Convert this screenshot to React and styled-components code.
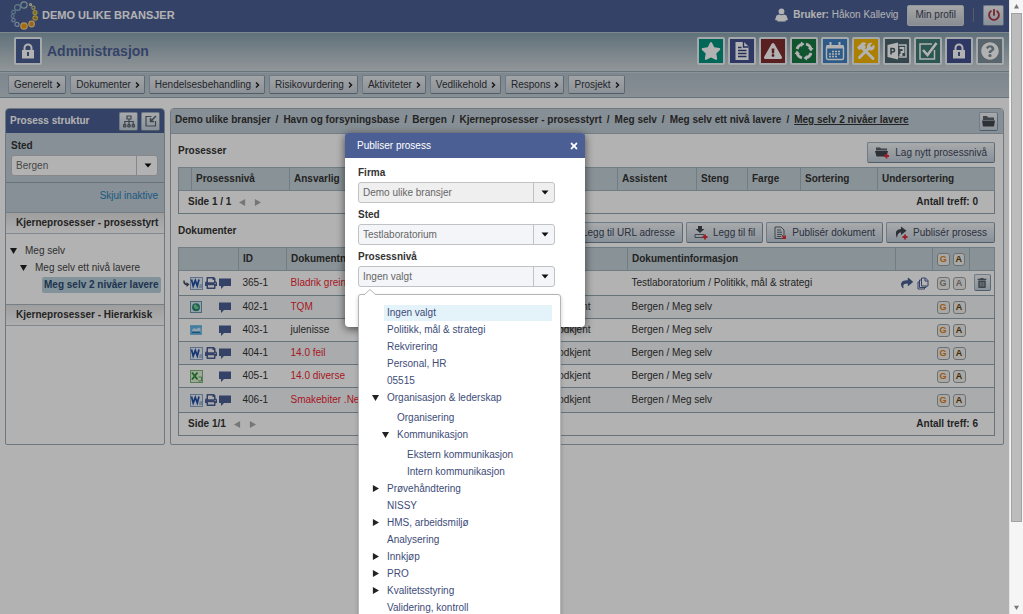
import React from "react";
import styled, { createGlobalStyle } from "styled-components";
import {
  FaStar,
  FaExclamationTriangle,
  FaQuestionCircle,
  FaPowerOff,
  FaPrint,
  FaShare,
  FaTrashAlt,
  FaTimes,
} from "react-icons/fa";

const GlobalStyle = createGlobalStyle`
  * {
    box-sizing: border-box;
  }
  body {
    margin: 0;
    background: #fff;
    color: #333;
    font-family: Arial, "Liberation Sans", sans-serif;
    font-size: 10px;
    line-height: 14px;
  }
  button, select {
    font: inherit;
    color: inherit;
    margin: 0;
  }
  a {
    color: inherit;
    text-decoration: none;
  }
  svg {
    display: block;
    flex: none;
  }
`;

const Shell = styled.div`
  display: flex;
  height: 100vh;
  overflow: hidden;
`;

const Page = styled.div`
  flex: 1;
  min-width: 0;
  position: relative;
  overflow: hidden;
`;

const TopBar = styled.header`
  display: flex;
  align-items: center;
  height: 32px;
  padding: 0 5px 2px 10px;
  background: #4c5f95;
  color: #fff;

  h1 {
    flex: 1;
    margin: 0 0 0 4px;
    font-size: 11px;
  }
`;

const UserInfo = styled.div`
  display: flex;
  align-items: center;

  p {
    margin: 0 9px 0 5px;
  }
`;

const Divider = styled.span`
  width: 1px;
  height: 14px;
  margin: 0 9px;
  background: #8a7f92;
`;

const Button = styled.button`
  display: inline-flex;
  align-items: center;
  justify-content: center;
  gap: 5px;
  height: 21px;
  padding: 0 7px;
  border: 1px solid #9fb0c0;
  border-bottom-color: #71869a;
  border-right-color: #8598aa;
  border-radius: 2px;
  background: linear-gradient(#f2f4f6, #c3cfdb);
  color: #3d4658;
  white-space: nowrap;
`;

const GreyButton = styled(Button)`
  border-color: #d3d8de;
  background: linear-gradient(#eeeff0, #c4c9d0);
`;

const SquareButton = styled(Button)`
  width: ${(p) => p.$size || 19}px;
  height: ${(p) => p.$size || 19}px;
  padding: 0;
  color: ${(p) => p.$color || "#56606c"};
`;

const TitleBar = styled.div`
  display: flex;
  align-items: center;
  height: 40px;
  padding: 0 5px 2px 14px;
  border-top: 1px solid #b4c3cd;
  border-bottom: 1px solid #93a5b1;
  background: linear-gradient(#8ba3b0, #d0d7db);

  h2 {
    flex: 1;
    margin: 0 0 0 5px;
    font-size: 14px;
    color: #4c5f95;
  }
`;

const Modules = styled.nav`
  display: flex;
  gap: 3px;
`;

const Tile = styled.a`
  display: flex;
  align-items: center;
  justify-content: center;
  width: 28px;
  height: 28px;
  border: 2px solid #eef3f5;
  border-radius: 2px;
  background: ${(p) => p.$bg};
  color: #fff;
`;

const Tabs = styled.nav`
  display: flex;
  align-items: center;
  gap: 4px;
  height: 26px;
  padding: 0 8px 1px;
  border-top: 1px solid #c6d3db;
  border-bottom: 1px solid #93a5b1;
  background: linear-gradient(#b4c2cb, #c2ced6);
`;

const Tab = styled(Button)`
  gap: 4px;
  height: 19px;
  padding: 0 4px 0 5px;
  background: linear-gradient(#e9ecee, #c9d1d9);
  color: #31353d;
`;

const Columns = styled.div`
  display: grid;
  grid-template-columns: 160px minmax(0, 1fr);
  gap: 5px;
  padding: 10px 5px;
`;

const Sidebar = styled.aside`
  border: 1px solid #9dadb9;
  border-radius: 4px 4px 2px 2px;
  overflow: hidden;
`;

const SidebarHead = styled.div`
  display: flex;
  align-items: center;
  gap: 3px;
  height: 24px;
  padding: 0 4px;
  background: #4c5f95;
  color: #fff;

  h3 {
    flex: 1;
    margin: 0;
    font-size: 10px;
  }
`;

const Filter = styled.div`
  height: 50px;
  padding: 6px 6px 6px 5px;
  border-bottom: 1px solid #93a5b1;
  background: #c0ced7;
`;

const FilterLink = styled.div`
  height: 29px;
  padding: 6px;
  background: #c0ced7;
  text-align: right;
  color: #2a7fb8;
`;

const GroupHead = styled.h4`
  margin: 0;
  height: 22px;
  padding-left: 10px;
  border-top: 1px solid #a9b6c0;
  border-bottom: 1px solid #b9c4cc;
  background: linear-gradient(#e3e3e3, #fbfbfb);
  font-size: 10px;
  line-height: 20px;
  white-space: nowrap;
`;

const SideTree = styled.ul`
  margin: 0;
  padding: 8px 0 10px 4px;
  list-style: none;
  min-height: 70px;
`;

const SideNode = styled.li`
  display: flex;
  align-items: center;
  gap: 8px;
  height: 17px;
  padding-left: ${(p) => p.$level * 10}px;
  color: #444;
`;

const Current = styled.strong`
  margin-left: 12px;
  padding: 1px 2px;
  border-radius: 2px;
  background: #b9d2de;
  color: #2f4a70;
  white-space: nowrap;
`;

const Panel = styled.main`
  min-width: 0;
  border: 1px solid #9dadb9;
  border-radius: 4px 4px 2px 2px;
  overflow: hidden;
`;

const PanelHead = styled.div`
  display: flex;
  align-items: center;
  justify-content: space-between;
  height: 25px;
  padding: 0 5px 0 4px;
  border-bottom: 1px solid #a5b5c0;
  background: #c0cdd6;
`;

const Crumbs = styled.nav`
  display: flex;
  gap: 5px;
  padding-bottom: 2px;
  font-weight: bold;
  white-space: nowrap;
  color: #333;

  a:last-child {
    text-decoration: underline;
  }
`;

const PanelBody = styled.div`
  padding: 8px 8px 8px 7px;
`;

const SectionHead = styled.div`
  display: flex;
  align-items: center;
  gap: 3px;
  height: 21px;
  margin: ${(p) => p.$top || 0}px 0 4px;

  h3 {
    flex: 1;
    margin: 0;
    padding-bottom: 4px;
    font-size: 10px;
  }
`;

const Table = styled.table`
  width: 100%;
  border: 1px solid #93a5b1;
  border-collapse: collapse;
  table-layout: fixed;

  th {
    height: 23px;
    padding: 0 4px;
    border: 1px solid #a2b3be;
    background: #c5d1d7;
    text-align: left;
    white-space: nowrap;
  }
  td {
    height: 23px;
    padding: 0 4px;
    border-bottom: 1px solid #93a5b1;
    white-space: nowrap;
    overflow: hidden;
  }
`;

const DocRow = styled.tr`
  background: ${(p) => (p.$odd ? "#f3f5f6" : "#fff")};

  td {
    height: ${(p) => (p.$tall ? 25 : 23)}px;
  }
`;

const DocLink = styled.a`
  color: ${(p) => (p.$red ? "#f01f33" : "#333")};
`;

const FileIcons = styled.div`
  display: grid;
  grid-template-columns: 7px 15px 14px 14px;
  align-items: center;
  color: #4c5f95;
`;

const TableFoot = styled.div`
  display: flex;
  align-items: center;
  justify-content: space-between;
  padding: 0 12px 0 5px;
  font-weight: bold;
`;

const Pager = styled.span`
  display: inline-flex;
  align-items: center;
  gap: 8px;
  color: #aaa;

  b {
    color: #333;
  }
`;

const Badges = styled.div`
  display: flex;
  justify-content: center;
  gap: 3px;
`;

const Badge = styled.span`
  width: 13px;
  height: 13px;
  border: 1px solid #98a2a8;
  border-radius: 3px;
  background: #f4f1ec;
  color: ${(p) => p.$color};
  font-weight: bold;
  font-size: 9px;
  line-height: 11px;
  text-align: center;
`;

const RowActions = styled.div`
  display: flex;
  align-items: center;
  justify-content: flex-end;
  gap: 4px;
  color: #4c5f95;
`;

const Overlay = styled.div`
  position: absolute;
  inset: 0;
  background: rgba(0, 0, 0, 0.3);
`;

const Modal = styled.section`
  position: absolute;
  top: 133px;
  left: 345px;
  width: 240px;
  height: 194px;
  border-radius: 4px;
  background: #fff;
  box-shadow: 0 2px 8px rgba(0, 0, 0, 0.6);
`;

const ModalHead = styled.div`
  display: flex;
  align-items: center;
  justify-content: space-between;
  height: 25px;
  padding: 0 6px 0 12px;
  border-radius: 3px 3px 0 0;
  background: #4c5f95;
  color: #fff;

  button {
    padding: 0;
    border: 0;
    background: none;
  }
`;

const ModalBody = styled.div`
  position: relative;
  padding: 8px 30px 0 13px;
`;

const Field = styled.div`
  margin-bottom: 5px;

  label {
    display: block;
    margin-bottom: 2px;
    font-weight: bold;
  }
`;

const SelectBox = styled.div`
  display: grid;
  height: 21px;

  select {
    grid-area: 1 / 1;
    appearance: none;
    width: 100%;
    height: 21px;
    padding: 0 24px 0 4px;
    border: 1px solid #c0c2c6;
    border-radius: 3px;
    background: ${(p) => p.$bg || "#f4f5f8"};
    color: #666;
    opacity: 1;
  }
  span {
    grid-area: 1 / 1;
    justify-self: end;
    display: flex;
    align-items: center;
    justify-content: center;
    width: 22px;
    border-left: 1px solid #c0c2c6;
    pointer-events: none;
  }
`;

const Popover = styled.div`
  position: absolute;
  top: 136px;
  left: 13px;
  width: 203px;
  padding: 9px 8px 20px 9px;
  border: 1px solid #b5b5b8;
  border-radius: 3px;
  background: #fff;
  box-shadow: 0 2px 4px rgba(0, 0, 0, 0.2);
`;

const Pointer = styled.svg`
  position: absolute;
  top: -6px;
  left: 5px;
`;

const Tree = styled.ul`
  margin: 0;
  padding: ${(p) => (p.$nested ? "3px 0 0 10px" : "0")};
  list-style: none;
`;

const TreeRow = styled.div`
  display: grid;
  grid-template-columns: 16px 1fr;
  align-items: center;
  height: 17px;

  span {
    padding-left: 4px;
  }
  a {
    padding: 1px 3px;
    background: ${(p) => (p.$active ? "#e4f2f9" : "none")};
    color: #3d4b78;
  }
`;

const ScrollTrack = styled.div`
  display: flex;
  flex-direction: column;
  align-items: center;
  width: 14px;
  padding: 4px 0;
  border-left: 1px solid #e6e6e6;
  background: #f5f5f5;
  color: #777;
`;

const ScrollThumb = styled.div`
  width: 11px;
  height: 84%;
  margin: 4px 0 auto;
  border: 1px solid #a2a2a2;
  background: #bcbcbc;
`;

const Triangle = ({ dir = "down", size = 7, color = "currentColor" }) => {
  const paths = {
    down: "M0 1h8L4 8z",
    up: "M0 7h8L4 0z",
    right: "M1 0v8l7-4z",
    left: "M7 0v8L0 4z",
  };
  return (
    <svg width={size} height={size} viewBox="0 0 8 8">
      <path d={paths[dir]} fill={color} />
    </svg>
  );
};

const Caret = () => (
  <svg width="8" height="5" viewBox="0 0 8 5">
    <path d="M0.5 0.5h7L4 4.5z" fill="#111" />
  </svg>
);

const Chevron = () => (
  <svg width="5" height="8" viewBox="0 0 5 8">
    <path d="M1 1.500L3.500 4 1 6.500" fill="none" stroke="#222" strokeWidth="1.500" />
  </svg>
);

const Logo = () => (
  <svg width="28" height="30" viewBox="0 0 28 30">
    <g fill="none" strokeWidth="1.2">
      <circle cx="14" cy="5" r="3.2" stroke="#a9c7c9" />
      <circle cx="7.5" cy="7.5" r="2.9" stroke="#8fb2c0" />
      <circle cx="3.6" cy="12" r="1.8" stroke="#86a9c0" />
      <circle cx="2.6" cy="16" r="1.5" stroke="#86a9c0" />
      <circle cx="3.4" cy="20.2" r="1.7" stroke="#9bb5cf" />
      <circle cx="7" cy="24.4" r="2" stroke="#a7bdd6" />
      <circle cx="20.6" cy="4.6" r="1" stroke="#dfe0c4" />
      <circle cx="23.4" cy="7.8" r="1.6" stroke="#d3c878" />
      <circle cx="25" cy="12.600" r="2" stroke="#dcc655" fill="#a29845" />
      <circle cx="25.200" cy="18" r="2.200" stroke="#e5c34c" fill="#a08a3d" />
      <circle cx="21.6" cy="24" r="2.800" stroke="#f0cf86" fill="#d8922a" />
      <circle cx="14" cy="26" r="3.200" stroke="#f3d08c" fill="#f09a12" />
    </g>
  </svg>
);

const Person = () => (
  <svg width="13" height="14" viewBox="0 0 13 14">
    <circle cx="6.5" cy="3.400" r="2.900" fill="#fff" />
    <path d="M1.500 7.500q1-.500 2.500-1 2.500 1.500 5 0 1.500.500 2.500 1L13 12l-2.500.500V13.500h-8v-1L0 12z" fill="#fff" />
  </svg>
);

const Lock = () => (
  <svg width="14" height="16" viewBox="0 0 14 16">
    <path d="M3.500 8V5a3.500 3.500 0 0 1 7 0v3" fill="none" stroke="#fff" strokeWidth="2" />
    <path d="M1 7h12v8.500H1z" fill="#fff" />
    <path d="M6 9h2v4H6z" fill="#4c5f95" />
  </svg>
);

const Sheet = () => (
  <svg width="16" height="20" viewBox="0 0 16 20">
    <path d="M1.500 1h8.500l4.500 4.500V19h-13z" fill="#fff" />
    <path d="M9.500 1v5h5M4 6.500h3.500M4 9.500h8.500M4 12.500h8.500M4 15.500h8.500" stroke="#35437d" strokeWidth="1.400" fill="none" />
  </svg>
);

const Cycle = () => (
  <svg width="20" height="20" viewBox="0 0 20 20">
    <g fill="none" stroke="#fff" strokeWidth="2.800">
      <path d="M3 8A7.300 7.300 0 0 1 7.500 3.200" />
      <path d="M12 3a7.300 7.300 0 0 1 4.800 4.300" />
      <path d="M17 12a7.300 7.300 0 0 1-4.500 4.800" />
      <path d="M8 17a7.300 7.300 0 0 1-4.800-4.300" />
    </g>
    <path d="M7 0.500v5.500l3.500-3zM19.500 7h-5.500l3 3.500zM13 19.500V14l-3.500 3zM.5 13H6L3 9.500z" fill="#fff" />
  </svg>
);

const Calendar = () => (
  <svg width="20" height="20" viewBox="0 0 20 20">
    <rect x="1.500" y="5" width="17" height="13.500" rx="1.500" fill="none" stroke="#fff" strokeWidth="1.400" />
    <path d="M1.500 4h17v3.500h-17z" fill="#fff" />
    <path d="M5.500 1v4.500M14.500 1v4.500" stroke="#fff" strokeWidth="2" />
    <path d="M7 10.500h9M4 13h12M4 15.500h9" stroke="#fff" strokeWidth="1.700" strokeDasharray="2 1" />
  </svg>
);

const Tools = () => (
  <svg width="20" height="20" viewBox="0 0 20 20">
    <path d="M7.500 8L17 17.500" stroke="#fff" strokeWidth="3" strokeLinecap="round" />
    <path d="M1 6.500L6 1.500q2-.500 4.500.500L8.500 4l1.500 2-3.500 3.500L5 8 3 9z" fill="#fff" />
    <path d="M3.500 16.500L13 7" stroke="#fff" strokeWidth="3" strokeLinecap="round" />
    <path d="M16.500 2L14 4.500l1.500 1.500L18 3.500q1.500 3-.500 5-2 1.500-4.500.500l-2-2.500q-.500-2.500 1.500-4 1.500-1.300 4-.500z" fill="#fff" />
  </svg>
);

const Slides = () => (
  <svg width="20" height="18" viewBox="0 0 20 18">
    <path d="M0.500 3L11 0.500v17L0.500 15z" fill="#fff" />
    <path d="M4 12.500V6.500h1.500q2 0 2 1.700T5.500 9.900H4" fill="none" stroke="#445960" strokeWidth="1.500" />
    <path d="M11.500 3H19v12h-7.500" fill="none" stroke="#fff" strokeWidth="1.500" />
    <path d="M12.500 6h4v4h-2v3h-2" fill="none" stroke="#fff" strokeWidth="1.800" />
  </svg>
);

const Check = () => (
  <svg width="20" height="20" viewBox="0 0 20 20">
    <path d="M14 3H2v15h14.500V9" fill="none" stroke="#fff" strokeWidth="1.500" />
    <path d="M5 9l4.500 5L18.500 2" fill="none" stroke="#fff" strokeWidth="2.600" />
  </svg>
);

const Sitemap = () => (
  <svg width="12" height="13" viewBox="0 0 12 13">
    <path d="M4 1h4v3H4zM6 4v5M1.800 9V6.500h8.400V9" fill="none" stroke="#59636e" strokeWidth="1.200" />
    <path d="M0.500 9.500h2.400V12H.5zM4.800 9.500h2.400V12H4.800zM9.100 9.500h2.400V12H9.100z" fill="#8b949c" stroke="#59636e" />
  </svg>
);

const Collapse = () => (
  <svg width="12" height="12" viewBox="0 0 12 12">
    <path d="M6.500 1.500H1v9.500h9.500V6" fill="none" stroke="#59636e" strokeWidth="1.200" />
    <path d="M11 1L6 6M5.500 3v3.500H9" fill="none" stroke="#59636e" strokeWidth="1.500" />
  </svg>
);

const Plus = ({ x = 8, y = 7 }) => (
  <path d={`M${x + 2.5} ${y}v5M${x} ${y + 2.5}h5`} stroke="#e02a38" strokeWidth="1.800" />
);

const Folder = () => (
  <svg width="13" height="12" viewBox="0 0 13 12">
    <path d="M1 1h4l1 1.500h6V5H1z" fill="#5c636b" />
    <path d="M0 5.500h13L12 11.500H1z" fill="#41474f" />
  </svg>
);

const FolderPlus = () => (
  <svg width="15" height="13" viewBox="0 0 15 13">
    <path d="M1 1.500h4l1 1h6v2H1z" fill="#5c636b" />
    <path d="M0 5h13L11.500 10.500H1.500z" fill="#41474f" />
    <Plus x={9} y={7.500} />
  </svg>
);

const FilePlus = () => (
  <svg width="14" height="14" viewBox="0 0 14 14">
    <path d="M4 0h4v3h2.500L6 7 1.500 3H4z" fill="#41474f" />
    <path d="M1 8.500h9v3H1z" fill="none" stroke="#59636e" />
    <Plus x={8.500} y={8.500} />
  </svg>
);

const DocArrow = () => (
  <svg width="13" height="14" viewBox="0 0 13 14">
    <path d="M1 1h6l3 3v8.500H1z" fill="none" stroke="#59636e" />
    <path d="M3 4h4M3 6.200h5M3 8.400h5M3 10.500h4" stroke="#59636e" />
    <path d="M12 13H7.500l1.500-1.500-1.500-1.500 1-1L10 10.500 11.800 9z" fill="#e02a38" />
  </svg>
);

const SharePlus = () => (
  <svg width="14" height="14" viewBox="0 0 14 14">
    <path d="M7 0.500l5.500 4.300L7 9V6.500Q3.500 6.300 3 12 -.500 3.500 7 3z" fill="#41474f" />
    <Plus x={8.500} y={8.500} />
  </svg>
);

const Copies = () => (
  <svg width="12" height="13" viewBox="0 0 12 13">
    <path d="M4.500 1h4l2.500 2.500V9H4.500zM8 1v3h3M4 3H2.500v7.500H9V9M2.500 5H1v7h6.500v-1.500" fill="none" stroke="#4c5f95" />
  </svg>
);

const Comment = () => (
  <svg width="12" height="11" viewBox="0 0 12 11">
    <path d="M0 0.500h12v7.500H5L2 11V8H0z" fill="#4c5f95" />
  </svg>
);

const Reply = () => (
  <svg width="7" height="7" viewBox="0 0 7 7">
    <path d="M1 0.500Q.8 4.300 4 4.500" fill="none" stroke="#3d4b66" strokeWidth="1.500" />
    <path d="M3.500 2v5L6.500 4.500z" fill="#3d4b66" />
  </svg>
);

const FileType = ({ type }) => {
  if (type === "word") {
    return (
      <svg width="13" height="13" viewBox="0 0 13 13">
        <rect x=".5" y=".5" width="12" height="12" fill="#e9f0fa" stroke="#89a2c7" />
        <path d="M1.500 2.500l1.700 6.500L5.300 3.500l2 5.500L9 2.500" fill="none" stroke="#1f4fa3" strokeWidth="1.700" />
        <path d="M9.500 8H12M9 10h3" stroke="#6485bb" />
      </svg>
    );
  }
  if (type === "excel") {
    return (
      <svg width="13" height="13" viewBox="0 0 13 13">
        <rect x=".5" y=".5" width="12" height="12" fill="#e2f2dc" stroke="#7fb579" />
        <path d="M2 2.500l5.500 7M7.500 2.500L2 9.500" stroke="#2d8f35" strokeWidth="1.900" />
        <path d="M8.500 7h3v4H8" fill="none" stroke="#5faa5c" />
      </svg>
    );
  }
  if (type === "web") {
    return (
      <svg width="12" height="12" viewBox="0 0 12 12">
        <rect x=".5" y=".5" width="11" height="11" fill="#d7ebf0" stroke="#6e94a8" />
        <circle cx="6" cy="6.200" r="4" fill="#2d8a80" />
        <path d="M3.500 5q2-2.500 3-.500T9 6Q7.500 9 5 7.500z" fill="#7fd68a" />
      </svg>
    );
  }
  return (
    <svg width="12" height="12" viewBox="0 0 12 12">
      <rect x=".5" y="1.500" width="11" height="9" fill="#5eb5e8" stroke="#7cc0e4" />
      <path d="M2 6l2-2 2 1 3-1.500 1.500 1V8H2z" fill="#cdeaf8" />
      <path d="M2 7.500h8v1.500H2z" fill="#2276b3" />
    </svg>
  );
};

const modules = [
  { name: "Favoritter", bg: "#009480", icon: <FaStar size={20} /> },
  { name: "Dokumenter", bg: "#445190", icon: <Sheet /> },
  { name: "Avvik", bg: "#822f30", icon: <FaExclamationTriangle size={18} /> },
  { name: "Prosess", bg: "#187a44", icon: <Cycle /> },
  { name: "Kalender", bg: "#3f83c4", icon: <Calendar /> },
  { name: "Vedlikehold", bg: "#f5b800", icon: <Tools /> },
  { name: "Presentasjon", bg: "#4b636d", icon: <Slides /> },
  { name: "Oppgaver", bg: "#3f7b74", icon: <Check /> },
  { name: "Administrasjon", bg: "#445190", icon: <Lock /> },
  { name: "Hjelp", bg: "#7f919b", icon: <FaQuestionCircle size={18} /> },
];

const tabs = [
  "Generelt",
  "Dokumenter",
  "Hendelsesbehandling",
  "Risikovurdering",
  "Aktiviteter",
  "Vedlikehold",
  "Respons",
  "Prosjekt",
];

const crumbs = [
  "Demo ulike bransjer",
  "Havn og forsyningsbase",
  "Bergen",
  "Kjerneprosesser - prosesstyrt",
  "Meg selv",
  "Meg selv ett nivå lavere",
  "Meg selv 2 nivåer lavere",
];

const documents = [
  { id: "365-1", type: "word", print: true, name: "Bladrik greining", red: true, status: "", info: "Testlaboratorium / Politikk, mål & strategi", own: true },
  { id: "402-1", type: "web", name: "TQM", red: true, status: "Godkjent", info: "Bergen / Meg selv" },
  { id: "403-1", type: "image", name: "julenisse", status: "Godkjent", info: "Bergen / Meg selv" },
  { id: "404-1", type: "word", print: true, name: "14.0 feil", red: true, status: "Godkjent", info: "Bergen / Meg selv" },
  { id: "405-1", type: "excel", name: "14.0 diverse", red: true, status: "Godkjent", info: "Bergen / Meg selv" },
  { id: "406-1", type: "word", print: true, name: "Smakebiter .Net", red: true, status: "Godkjent", info: "Bergen / Meg selv" },
];

const levels = [
  { name: "Ingen valgt", active: true },
  { name: "Politikk, mål & strategi" },
  { name: "Rekvirering" },
  { name: "Personal, HR" },
  { name: "05515" },
  {
    name: "Organisasjon & lederskap",
    children: [
      { name: "Organisering" },
      {
        name: "Kommunikasjon",
        children: [{ name: "Ekstern kommunikasjon" }, { name: "Intern kommunikasjon" }],
      },
    ],
  },
  { name: "Prøvehåndtering", closed: true },
  { name: "NISSY" },
  { name: "HMS, arbeidsmiljø", closed: true },
  { name: "Analysering" },
  { name: "Innkjøp", closed: true },
  { name: "PRO", closed: true },
  { name: "Kvalitetsstyring", closed: true },
  { name: "Validering, kontroll" },
];

const LevelTree = ({ items, nested }) => (
  <Tree $nested={nested}>
    {items.map((item) => (
      <li key={item.name}>
        <TreeRow $active={item.active}>
          <span>
            {item.children && <Triangle color="#222" />}
            {item.closed && <Triangle dir="right" color="#222" />}
          </span>
          <a href="#">{item.name}</a>
        </TreeRow>
        {item.children && <LevelTree items={item.children} nested />}
      </li>
    ))}
  </Tree>
);

const SelectField = ({ id, label, value, bg, disabled }) => (
  <Field>
    <label htmlFor={id}>{label}</label>
    <SelectBox $bg={bg}>
      <select id={id} disabled={disabled}>
        <option>{value}</option>
      </select>
      <span>
        <Caret />
      </span>
    </SelectBox>
  </Field>
);

const Paging = ({ page, total }) => (
  <TableFoot>
    <Pager>
      <b>Side {page}</b>
      <Triangle dir="left" />
      <Triangle dir="right" />
    </Pager>
    <span>Antall treff: {total}</span>
  </TableFoot>
);

const Approval = ({ muted }) => (
  <Badges>
    <Badge $color={muted ? "#888" : "#d9801f"}>G</Badge>
    <Badge $color={muted ? "#888" : "#5e3f08"}>A</Badge>
  </Badges>
);

const ProcessTable = () => (
  <Table>
    <colgroup>
      <col width="13" />
      <col width="98" />
      <col />
      <col width="79" />
      <col width="51" />
      <col width="53" />
      <col width="77" />
      <col width="117" />
    </colgroup>
    <thead>
      <tr>
        <th></th>
        <th>Prosessnivå</th>
        <th>Ansvarlig</th>
        <th>Assistent</th>
        <th>Steng</th>
        <th>Farge</th>
        <th>Sortering</th>
        <th>Undersortering</th>
      </tr>
    </thead>
    <tbody>
      <tr>
        <td colSpan="8">
          <Paging page="1 / 1" total={0} />
        </td>
      </tr>
    </tbody>
  </Table>
);

const DocumentTable = () => (
  <Table>
    <colgroup>
      <col width="60" />
      <col width="48" />
      <col />
      <col width="81" />
      <col width="268" />
      <col width="37" />
      <col width="37" />
      <col width="25" />
    </colgroup>
    <thead>
      <tr>
        <th></th>
        <th>ID</th>
        <th>Dokumentnavn</th>
        <th></th>
        <th>Dokumentinformasjon</th>
        <th></th>
        <th>
          <Approval />
        </th>
        <th></th>
      </tr>
    </thead>
    <tbody>
      {documents.map((doc, i) => (
        <DocRow key={doc.id} $odd={i % 2 === 1} $tall={doc.own || i === 5}>
          <td>
            <FileIcons>
              <span>{doc.own && <Reply />}</span>
              <FileType type={doc.type} />
              <span>{doc.print && <FaPrint size={12} />}</span>
              <Comment />
            </FileIcons>
          </td>
          <td>{doc.id}</td>
          <td>
            <DocLink href="#" $red={doc.red}>
              {doc.name}
            </DocLink>
          </td>
          <td>{doc.status}</td>
          <td>{doc.info}</td>
          <td>
            {doc.own && (
              <RowActions>
                <FaShare size={12} />
                <Copies />
              </RowActions>
            )}
          </td>
          <td>
            <Approval muted={doc.own} />
          </td>
          <td>
            {doc.own && (
              <SquareButton $size={17} aria-label="Slett">
                <FaTrashAlt size={10} />
              </SquareButton>
            )}
          </td>
        </DocRow>
      ))}
      <tr>
        <td colSpan="8">
          <Paging page="1/1" total={6} />
        </td>
      </tr>
    </tbody>
  </Table>
);

const App = () => {
  return (
    <Shell>
      <GlobalStyle />
      <Page>
        <TopBar>
          <Logo />
          <h1>DEMO ULIKE BRANSJER</h1>
          <UserInfo>
            <Person />
            <p>
              <b>Bruker:</b> Håkon Kallevig
            </p>
            <GreyButton>Min profil</GreyButton>
            <Divider />
            <SquareButton $size={21} $color="#b23a48" aria-label="Logg ut">
              <FaPowerOff size={12} />
            </SquareButton>
          </UserInfo>
        </TopBar>
        <TitleBar>
          <Tile as="span" $bg="#4c5f95">
            <Lock />
          </Tile>
          <h2>Administrasjon</h2>
          <Modules>
            {modules.map((m) => (
              <Tile key={m.name} href="#" aria-label={m.name} $bg={m.bg}>
                {m.icon}
              </Tile>
            ))}
          </Modules>
        </TitleBar>
        <Tabs>
          {tabs.map((tab) => (
            <Tab key={tab}>
              {tab}
              <Chevron />
            </Tab>
          ))}
        </Tabs>

        <Columns>
          <Sidebar>
            <SidebarHead>
              <h3>Prosess struktur</h3>
              <SquareButton aria-label="Struktur">
                <Sitemap />
              </SquareButton>
              <SquareButton aria-label="Skjul">
                <Collapse />
              </SquareButton>
            </SidebarHead>
            <Filter>
              <SelectField id="place" label="Sted" value="Bergen" bg="#fff" />
            </Filter>
            <FilterLink>
              <a href="#">Skjul inaktive</a>
            </FilterLink>
            <GroupHead>Kjerneprosesser - prosesstyrt</GroupHead>
            <SideTree>
              <SideNode $level={0}>
                <Triangle color="#222" />
                <a href="#">Meg selv</a>
              </SideNode>
              <SideNode $level={1}>
                <Triangle color="#222" />
                <a href="#">Meg selv ett nivå lavere</a>
              </SideNode>
              <SideNode $level={2}>
                <Current>Meg selv 2 nivåer lavere</Current>
              </SideNode>
            </SideTree>
            <GroupHead>Kjerneprosesser - Hierarkisk</GroupHead>
          </Sidebar>

          <Panel>
            <PanelHead>
              <Crumbs>
                {crumbs.map((crumb, i) => (
                  <React.Fragment key={crumb}>
                    {i > 0 && <span>/</span>}
                    <a href="#">{crumb}</a>
                  </React.Fragment>
                ))}
              </Crumbs>
              <SquareButton aria-label="Mappe">
                <Folder />
              </SquareButton>
            </PanelHead>
            <PanelBody>
              <SectionHead>
                <h3>Prosesser</h3>
                <Button>
                  <FolderPlus />
                  Lag nytt prosessnivå
                </Button>
              </SectionHead>
              <ProcessTable />
              <SectionHead $top={8}>
                <h3>Dokumenter</h3>
                <Button>
                  <FilePlus />
                  Legg til URL adresse
                </Button>
                <Button>
                  <FilePlus />
                  Legg til fil
                </Button>
                <Button>
                  <DocArrow />
                  Publisér dokument
                </Button>
                <Button>
                  <SharePlus />
                  Publisér prosess
                </Button>
              </SectionHead>
              <DocumentTable />
            </PanelBody>
          </Panel>
        </Columns>

        <Overlay>
          <Modal role="dialog" aria-label="Publiser prosess">
            <ModalHead>
              Publiser prosess
              <button aria-label="Lukk">
                <FaTimes size={10} />
              </button>
            </ModalHead>
            <ModalBody>
              <SelectField id="company" label="Firma" value="Demo ulike bransjer" bg="#efefef" disabled />
              <SelectField id="site" label="Sted" value="Testlaboratorium" />
              <SelectField id="level" label="Prosessnivå" value="Ingen valgt" />
              <Popover>
                <Pointer width="12" height="6" viewBox="0 0 12 6">
                  <path d="M0 6L6 .5 12 6" fill="#fff" stroke="#b5b5b8" />
                </Pointer>
                <LevelTree items={levels} />
              </Popover>
            </ModalBody>
          </Modal>
        </Overlay>
      </Page>
      <ScrollTrack>
        <Triangle dir="up" size={5} />
        <ScrollThumb />
        <Triangle size={5} />
      </ScrollTrack>
    </Shell>
  );
};

export default App;
